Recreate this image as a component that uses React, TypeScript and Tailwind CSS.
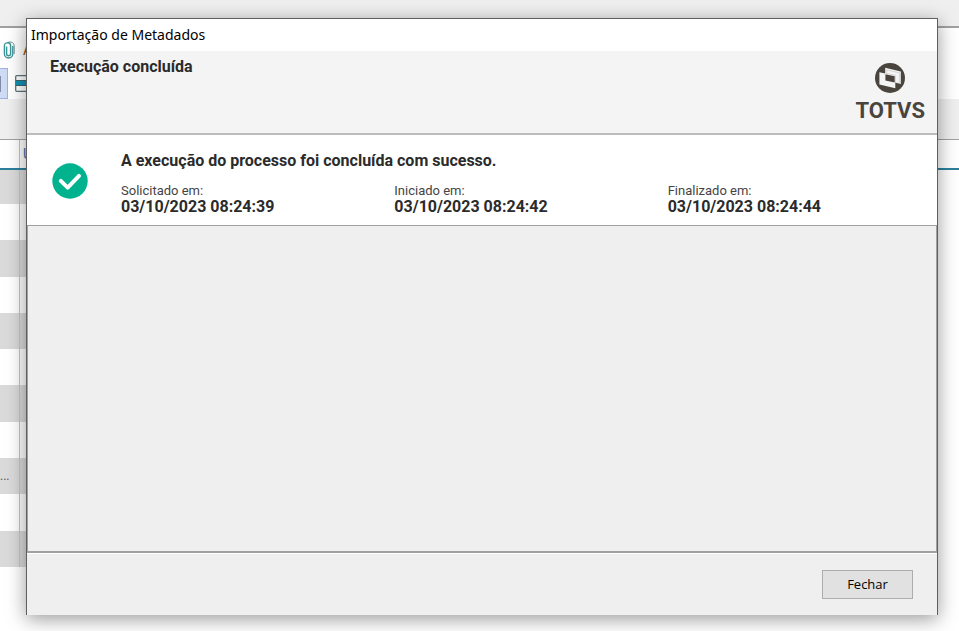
const details = [
  { label: "Solicitado em:", value: "03/10/2023 08:24:39" },
  { label: "Iniciado em:", value: "03/10/2023 08:24:42" },
  { label: "Finalizado em:", value: "03/10/2023 08:24:44" },
];

const rows = ["", "", "", "", "", "", "", "...", "", ""];

const TotvsLogo = () => {
  return (
    <div className="flex flex-col items-center text-[#4a443f]">
      <svg viewBox="0 0 30 30" className="h-[30px] w-[30px]" aria-hidden="true">
        <circle cx="15" cy="15" r="15" fill="currentColor" />
        {/* two overlapping panels with the dark square between them */}
        <path
          fill="#f4f4f4"
          fillRule="evenodd"
          d="M10.2 4.8 25.8 8.6V20.9L20.3 19.8V25.3L4.4 21.6V9.2L10.2 10.4ZM10.4 11.2V17.5L19.7 19.6V13.2Z"
        />
        <path fill="none" stroke="currentColor" strokeWidth=".7" d="M11.7 6.8V10.4L20.4 12.4V19.6L24.4 20.3V9.9Z" opacity=".25" />
      </svg>
      <span className="mt-[6px] font-['Roboto',sans-serif] text-[22px] leading-6 font-bold">TOTVS</span>
    </div>
  );
};

const BackgroundWindow = () => {
  return (
    <div className="absolute inset-0 overflow-hidden bg-white" aria-hidden="true">
      <div className="h-7 border-b-2 border-[#a0a0a0] bg-[#efefef]" />
      <div className="h-[71px] pt-3">
        <div className="flex h-5 items-center gap-2 pl-[3px] text-sm">
          <svg viewBox="0 0 12 18" className="h-[18px] w-3" fill="none" stroke="#3b9497" strokeWidth="1.4">
            <path d="M3.6 5.5V12.8a2 2 0 0 0 4 0V4.4a3 3 0 0 0-6.2 1.2v7.2a4.2 4.2 0 0 0 8.4 0V5" />
            <path d="M4.5 1.5C8 .2 11.2 1.6 11.2 5v8" stroke="#6b8f93" strokeWidth="1" />
          </svg>
          <span className="text-[#9a4a10]">A</span>
        </div>
        <div className="mt-2 flex h-[31px] items-center gap-[7px]">
          <div className="flex h-full w-2 items-center border border-l-0 border-[#9db2dc] bg-[#cddbf4]">
            <div className="h-4 w-px bg-[#7e8ca8]" />
          </div>
          <svg viewBox="0 0 20 17" className="h-[17px] w-5">
            <rect x=".7" y=".7" width="18" height="15.6" rx="1" fill="#fff" stroke="#5d7377" strokeWidth="1.3" />
            <path d="M1 6h18v4H1z" fill="#0f92b5" />
            <path d="M1 5.5h18M1 10.5h18" stroke="#40636a" />
          </svg>
        </div>
      </div>
      <div className="h-[41px] border-b border-[#a0a0a0] bg-[#efefef]" />
      <div className="flex h-[30px] border-b-2 border-[#2c7f9c]">
        <div className="w-5 border-r border-[#c4c4c4]" />
        <span className="pl-[3px] text-sm leading-7 text-[#2f75b5]">U</span>
      </div>
      <div className="w-7">
        <div className="h-[34px] bg-[#dadada]">
          <div className="h-full w-5 border-r border-[#c4c4c4]" />
        </div>
        <div className="flex h-[363px] flex-col">
          {rows.map((text, i) => (
            <div key={i} className="flex-1 odd:bg-white even:bg-[#dadada]">
              <div className="flex h-full w-5 items-center border-r border-[#c4c4c4] text-xs text-[#55555f]">
                {text}
              </div>
            </div>
          ))}
        </div>
      </div>
    </div>
  );
};

const App = () => {
  return (
    <div className="relative flex min-h-screen flex-col pt-[18px] pr-[21px] pb-4 pl-[26px] font-['Roboto',sans-serif]">
      <BackgroundWindow />
      <div
        role="dialog"
        aria-labelledby="dialog-title"
        className="relative flex flex-1 flex-col border border-b-0 border-[#5f5f5f] bg-[#efefef] shadow-[0_4px_18px_rgba(0,0,0,0.4)]"
      >
        <h1
          id="dialog-title"
          className="h-8 bg-white pl-1 font-['Noto_Sans',sans-serif] text-sm leading-8 text-black"
        >
          Importação de Metadados
        </h1>

        <header className="flex h-[84px] items-start justify-between border-b-2 border-[#bcbcbc] bg-[#f4f4f4] pr-3 pl-[23px]">
          <h2 className="pt-1 text-base leading-6 font-bold text-[#2b2b2b]">Execução concluída</h2>
          <div className="pt-3">
            <TotvsLogo />
          </div>
        </header>

        <section className="flex h-[90px] bg-white pl-[25px]">
          <svg viewBox="0 0 36 36" className="mt-7 h-9 w-9 shrink-0" role="img" aria-label="Sucesso">
            <circle cx="18" cy="18" r="17.7" fill="#00b28e" />
            <path
              d="M8.8 17.8 15.7 24.6 27 12.9"
              fill="none"
              stroke="#fff"
              strokeWidth="4"
              strokeLinecap="round"
              strokeLinejoin="round"
            />
          </svg>
          <div className="ml-[33px] flex-1 pt-4 text-[#2b2b2b]">
            <p className="text-base leading-5 font-bold">A execução do processo foi concluída com sucesso.</p>
            <dl className="mt-3 grid grid-cols-3 gap-x-1">
              {details.map((item) => (
                <div key={item.label}>
                  <dt className="text-[13px] leading-4 text-[#444]">{item.label}</dt>
                  <dd className="text-base leading-4 font-bold">{item.value}</dd>
                </div>
              ))}
            </dl>
          </div>
        </section>

        <div className="flex-1 border border-b-2 border-[#a0a0a0]" />

        <footer className="flex justify-end border-t border-white pt-4 pr-6 pb-4">
          <button
            type="button"
            className="h-[29px] w-[91px] border border-[#adadad] bg-[#e1e1e1] font-['Open_Sans',sans-serif] text-[13px] text-black"
          >
            Fechar
          </button>
        </footer>
      </div>
    </div>
  );
};

export default App;
